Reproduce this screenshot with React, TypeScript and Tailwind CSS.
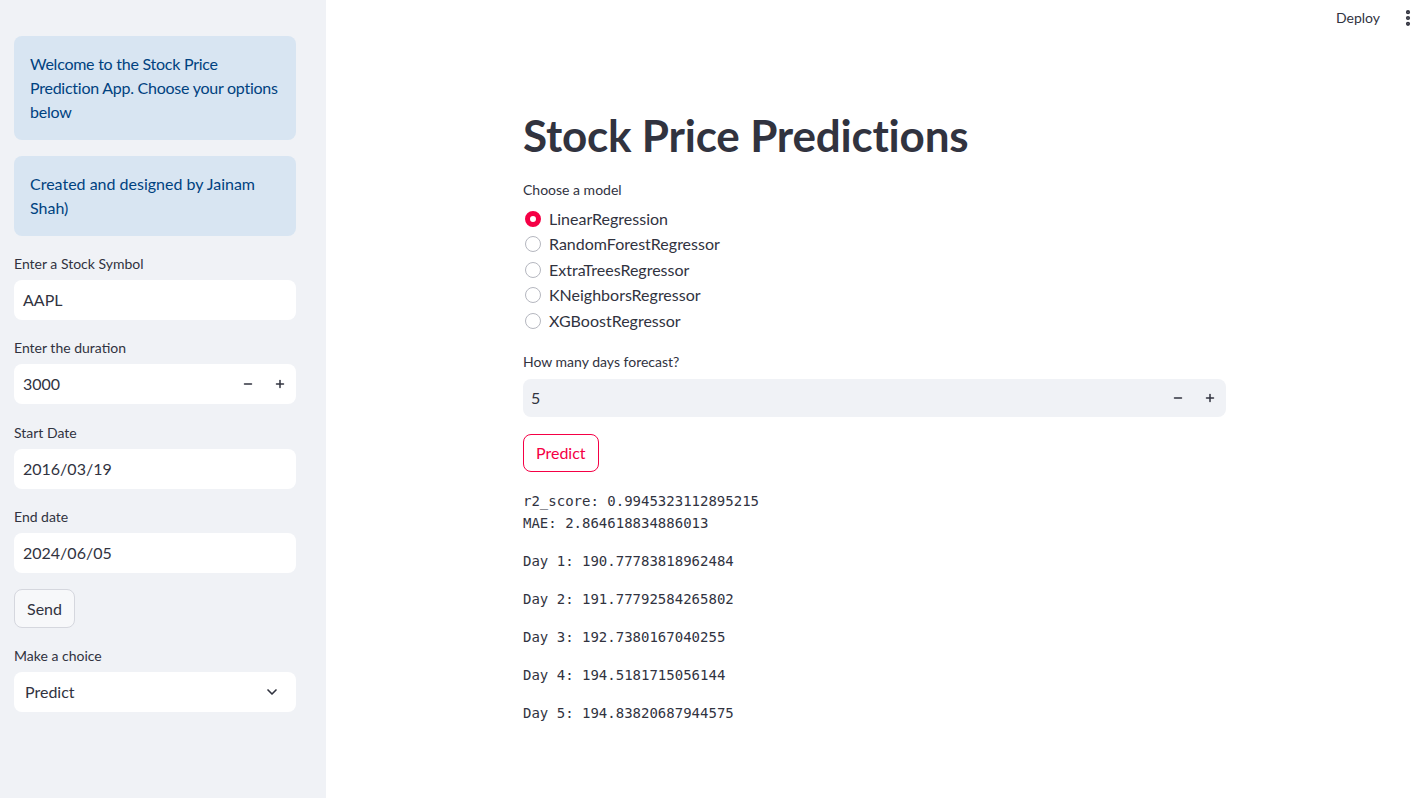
import { ChevronDown, Minus, Plus, EllipsisVertical } from 'lucide-react';

const MODELS = [
  'LinearRegression',
  'RandomForestRegressor',
  'ExtraTreesRegressor',
  'KNeighborsRegressor',
  'XGBoostRegressor',
];

const DAYS = [
  '190.77783818962484',
  '191.77792584265802',
  '192.7380167040255',
  '194.5181715056144',
  '194.83820687944575',
];

const sans = { fontFamily: '"Lato", "Noto Sans", sans-serif' };

function Label({ children }: { children: React.ReactNode }) {
  return <div className="text-[14px] leading-[20px] text-[#31333f] mb-[6px]">{children}</div>;
}

function TextBox({ value, stepper }: { value: string; stepper?: boolean }) {
  return (
    <div className="h-10 bg-white rounded-lg flex items-center pl-[9px] text-[16px] text-[#31333f]">
      <span className="flex-1">{value}</span>
      {stepper && (
        <div className="flex items-center">
          <span className="w-8 flex justify-center"><Minus className="w-3 h-3" strokeWidth={3} /></span>
          <span className="w-8 flex justify-center"><Plus className="w-3 h-3" strokeWidth={3} /></span>
        </div>
      )}
    </div>
  );
}

export default function App() {
  return (
    <div className="flex w-[1418px] h-[798px] bg-white text-[#31333f] overflow-hidden" style={sans}>
      <aside className="w-[326px] shrink-0 bg-[#f0f2f6] pt-9 px-[14px] pr-[30px]">
        <div className="bg-[#d8e5f2] rounded-lg pl-4 pr-1 py-4 text-[16px] leading-[24px] tracking-[-0.25px] text-[#004280]">
          Welcome to the Stock Price
          <br />
          Prediction App. Choose your options
          <br />
          below
        </div>
        <div className="bg-[#d8e5f2] rounded-lg px-4 py-4 mt-4 text-[16px] leading-[24px] text-[#004280]">
          Created and designed by Jainam Shah)
        </div>

        <div className="mt-[18px]">
          <Label>Enter a Stock Symbol</Label>
          <TextBox value="AAPL" />
        </div>
        <div className="mt-[18px]">
          <Label>Enter the duration</Label>
          <TextBox value="3000" stepper />
        </div>
        <div className="mt-[19px]">
          <Label>Start Date</Label>
          <TextBox value="2016/03/19" />
        </div>
        <div className="mt-[18px]">
          <Label>End date</Label>
          <TextBox value="2024/06/05" />
        </div>
        <button className="mt-4 h-[39px] px-3 rounded-lg border border-[#d5d7de] bg-[#f7f8fa] text-[16px] text-[#31333f]">
          Send
        </button>
        <div className="mt-[18px]">
          <Label>Make a choice</Label>
          <div className="h-10 bg-white rounded-lg flex items-center justify-between pl-[11px] pr-4 text-[16px]">
            <span>Predict</span>
            <ChevronDown className="w-4 h-4" strokeWidth={2.5} />
          </div>
        </div>
      </aside>

      <main className="flex-1 relative">
        <div className="absolute top-[7px] right-0 flex items-center gap-[18px] text-[14px]">
          <span>Deploy</span>
          <EllipsisVertical className="w-5 h-5" strokeWidth={3} />
        </div>

        <div className="ml-[197px] w-[703px] pt-[108px]">
          <h1 className="text-[44px] leading-[54px] font-bold tracking-[-0.2px] text-[#31333f]">
            Stock Price Predictions
          </h1>

          <div className="mt-[18px] text-[14px] leading-[20px]">Choose a model</div>
          <div className="mt-[6px] flex flex-col">
            {MODELS.map((m, i) => (
              <div key={m} className="flex items-center h-[25.5px] text-[16px]">
                {i === 0 ? (
                  <span className="ml-[2px] w-4 h-4 rounded-full border-[5px] border-[#f50045] bg-white" />
                ) : (
                  <span className="ml-[2px] w-4 h-4 rounded-full border border-[#b5b7bf] bg-white" />
                )}
                <span className="ml-2">{m}</span>
              </div>
            ))}
          </div>

          <div className="mt-[18px] text-[14px] leading-[20px]">How many days forecast?</div>
          <div className="mt-[7px] h-[38px] bg-[#f0f2f6] rounded-lg flex items-center pl-[8px] text-[16px]">
            <span className="flex-1">5</span>
            <span className="w-8 flex justify-center"><Minus className="w-3 h-3" strokeWidth={3} /></span>
            <span className="w-8 flex justify-center"><Plus className="w-3 h-3" strokeWidth={3} /></span>
          </div>

          <button className="mt-[17px] h-[38px] px-3 rounded-lg border border-[#f50045] bg-white text-[16px] text-[#f50045]">
            Predict
          </button>

          <div
            className="mt-[18px] text-[14px] leading-[22px] text-[#31333f]"
            style={{ fontFamily: '"DejaVu Sans Mono", "Liberation Mono", monospace' }}
          >
            <div>r2_score: 0.9945323112895215</div>
            <div>MAE: 2.864618834886013</div>
            {DAYS.map((d, i) => (
              <div key={d} className="mt-[16px]">
                Day {i + 1}: {d}
              </div>
            ))}
          </div>
        </div>
      </main>
    </div>
  );
}
